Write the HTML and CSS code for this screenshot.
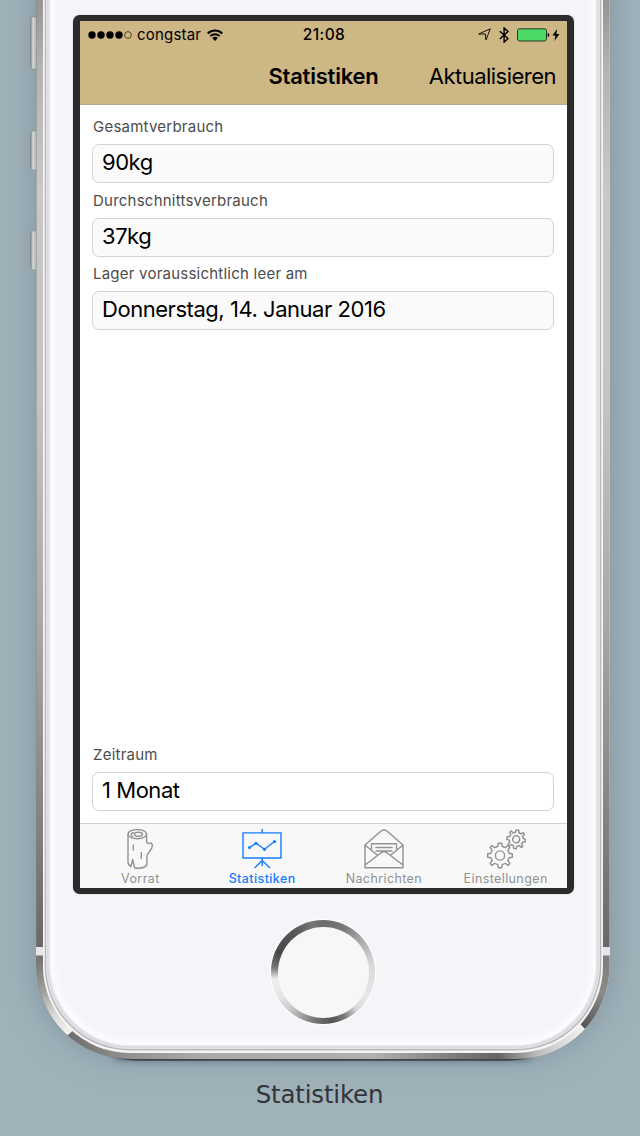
FILE: index.html
```html
<!DOCTYPE html>
<html lang="de">
<head>
<meta charset="utf-8">
<title>Statistiken</title>
<link rel="stylesheet" href="styles.css">
</head>
<body>
<div class="page">
  <svg class="device" viewBox="0 0 640 1136" aria-hidden="true">
    <defs>
      <linearGradient id="metal" gradientUnits="userSpaceOnUse" x1="0" y1="0" x2="0" y2="948">
        <stop offset="0" stop-color="#949494"/><stop offset=".07" stop-color="#b3b3b2"/><stop offset=".2" stop-color="#c8c8c6"/>
        <stop offset=".42" stop-color="#c4c4c2"/><stop offset=".65" stop-color="#a9a9a8"/><stop offset=".85" stop-color="#858585"/><stop offset="1" stop-color="#686868"/>
      </linearGradient>
      <linearGradient id="cornerL" gradientUnits="userSpaceOnUse" x1="38" y1="960" x2="64" y2="1034">
        <stop offset="0" stop-color="#757575"/><stop offset=".4" stop-color="#a0a09e"/><stop offset=".75" stop-color="#dcdcda"/><stop offset="1" stop-color="#f0f0ee"/>
      </linearGradient>
      <linearGradient id="bottom" gradientUnits="userSpaceOnUse" x1="66" y1="0" x2="581" y2="0">
        <stop offset="0" stop-color="#6c6c6b"/><stop offset=".1" stop-color="#8c8c8b"/><stop offset=".25" stop-color="#a9aaa8"/><stop offset=".6" stop-color="#b0b0ae"/>
        <stop offset=".77" stop-color="#777776"/><stop offset=".84" stop-color="#656565"/><stop offset=".92" stop-color="#c0c0be"/><stop offset="1" stop-color="#f0f0ee"/>
      </linearGradient>
      <linearGradient id="cornerR" gradientUnits="userSpaceOnUse" x1="608" y1="956" x2="586" y2="1028">
        <stop offset="0" stop-color="#7c7c7c"/><stop offset=".5" stop-color="#8c8c8b"/><stop offset="1" stop-color="#555"/>
      </linearGradient>
      <linearGradient id="key" x1="0" y1="0" x2="1" y2="0">
        <stop offset="0" stop-color="#77807f"/><stop offset=".3" stop-color="#d5d8d7"/><stop offset=".65" stop-color="#b4b9b9"/><stop offset="1" stop-color="#777d7f"/>
      </linearGradient>
      <filter id="wide" x="-20%" y="-20%" width="140%" height="140%"><feGaussianBlur stdDeviation="16"/></filter>
      <filter id="near" x="-20%" y="-50%" width="140%" height="200%"><feGaussianBlur stdDeviation="3"/></filter>
      <filter id="soft"><feGaussianBlur stdDeviation="2"/></filter>
      <clipPath id="upper"><rect x="30" y="0" width="585" height="951"/></clipPath>
      <clipPath id="left"><path d="M30 951H120V991L65.500 1037 60 1042H30z"/></clipPath>
      <clipPath id="right"><path d="M616 951H560V1000L583 1027 590 1033H616z"/></clipPath>
    </defs>
    <rect x="35" y="-150" width="576" height="1206" rx="92" fill="#697d8a" opacity=".55" filter="url(#wide)"/>
    <rect x="110" y="1035" width="426" height="26" rx="12" fill="#435562" opacity=".6" filter="url(#near)"/>
    <g fill="url(#key)" stroke="#868e90" stroke-width=".6">
      <rect x="30.500" y="17" width="8" height="52" rx="2"/>
      <rect x="30.500" y="131" width="8" height="39" rx="3"/>
      <rect x="30.500" y="231" width="8" height="39" rx="3"/>
    </g>
    <rect x="46" y="-200" width="554" height="1260.700" rx="93" fill="#3d4347"/>
    <rect x="36.500" y="-200" width="573" height="1259" rx="93" fill="url(#bottom)"/>
    <rect x="36.500" y="-200" width="573" height="1259" rx="93" fill="url(#metal)" clip-path="url(#upper)"/>
    <rect x="36.500" y="-200" width="573" height="1259" rx="93" fill="url(#cornerL)" clip-path="url(#left)"/>
    <rect x="36.500" y="-200" width="573" height="1259" rx="93" fill="url(#cornerR)" clip-path="url(#right)"/>
    <rect x="36" y="947" width="574" height="8.500" fill="#e4e5e8"/>
    <rect x="43" y="-200" width="560" height="1253" rx="87" fill="#f5f5f3"/>
    <rect x="44.700" y="-200" width="556.600" height="1250.500" rx="85" fill="#b9b9bb"/>
    <rect x="46" y="-200" width="554" height="1249" rx="84" fill="#e3e3e7"/>
    <rect x="47.500" y="-200" width="551" height="1247.500" rx="83" fill="#d5d6dc"/>
    <rect x="48.500" y="-200" width="549" height="1246.500" rx="82" fill="#e9eaf0"/>
    <rect x="50.500" y="-200" width="545" height="1245" rx="80" fill="#fbfcfe"/>
    <rect x="55" y="-200" width="536" height="1240" rx="76" fill="#f4f5f8" filter="url(#soft)"/>
  </svg>

  <main class="screen">
    <header class="navbar">
      <div class="status">
        <div class="carrier">
          <svg width="45" height="10" viewBox="0 0 45 10"><g><circle cx="4" cy="5" r="3.700"/><circle cx="13" cy="5" r="3.700"/><circle cx="22" cy="5" r="3.700"/><circle cx="31" cy="5" r="3.700"/><circle cx="40" cy="5" r="3.400" fill="none" stroke="#000" stroke-width=".6"/></g></svg>
          <span class="carrier-name">congstar</span>
          <svg width="16" height="12" viewBox="0 0 16 12"><g fill="none" stroke="#000" stroke-width="1.900"><path d="M.7 4.500A10.300 10.300 0 0 1 15.300 4.500"/><path d="M3.300 7.200A6.600 6.600 0 0 1 12.700 7.200"/></g><path d="M8 12 5.200 9.100A4 4 0 0 1 10.800 9.100z"/></svg>
        </div>
        <span class="clock">21:08</span>
        <div class="indicators">
          <svg width="13" height="13" viewBox="0 0 13 13"><path d="M12.300.8 8 12 7.300 6 .7 6z" fill="none" stroke="#000" stroke-width=".9"/></svg>
          <svg class="bluetooth" width="10" height="16" viewBox="0 0 10 16"><path d="M.8 4.200 9 11.500 5.100 15.200V.9L9 4.500.8 12" fill="none" stroke="#000" stroke-width="1.400"/></svg>
          <svg class="battery" width="33" height="14" viewBox="0 0 33 14"><rect x=".5" y=".8" width="29" height="12.200" rx="2" fill="#4cd964" stroke="#111" stroke-width=".8"/><path d="M30.700 5q1.700.3 1.700 2t-1.700 2z"/></svg>
          <svg width="8" height="12" viewBox="0 0 8 12"><path d="M5.200 0 .4 6.600H3.500L2.300 12 7.500 5H4.300z"/></svg>
        </div>
      </div>
      <div class="titlebar">
        <h1 class="title">Statistiken</h1>
        <span class="refresh">Aktualisieren</span>
      </div>
    </header>

    <section class="content">
      <div class="field"><span class="label">Gesamtverbrauch</span><div class="value"><span>90kg</span></div></div>
      <div class="field"><span class="label">Durchschnittsverbrauch</span><div class="value"><span>37kg</span></div></div>
      <div class="field"><span class="label">Lager voraussichtlich leer am</span><div class="value"><span>Donnerstag, 14. Januar 2016</span></div></div>
      <div class="field period"><span class="label">Zeitraum</span><div class="value editable"><span>1 Monat</span></div></div>
    </section>

    <nav class="tabs">
      <div class="tab">
        <svg width="40" height="40" viewBox="0 0 40 40"><g class="line"><ellipse cx="17.300" cy="5.200" rx="9.300" ry="4.600"/><ellipse cx="18.500" cy="5.300" rx="4" ry="2.100"/><path d="M12.500 7.500q-3-2.500 1-4M8 5.500V33Q8 36 11 37.500L12.700 30.500 14.500 38.700Q20 40 24.500 38Q27.300 37 27 33.500L26.800 28C26.800 23 32.300 21.500 32.300 17V15.500L30.600 13.800C29 15 27 14.500 26.600 13V5.500M13.300 16V21M21.300 23.500V29.500"/></g></svg>
        <span>Vorrat</span>
      </div>
      <div class="tab active">
        <svg width="40" height="40" viewBox="0 0 40 40"><g class="line"><path d="M1 3.900H39V29H1zM20.200.5V3.900M20.200 29V36.500M13 38.500 20.200 31.500 27.500 38.500"/><path d="M7.500 18.500 14 14.300 22.500 20.300 32.500 12.500"/></g><g fill="currentColor"><circle cx="7.500" cy="18.500" r="1.600"/><circle cx="14" cy="14.300" r="1.600"/><circle cx="22.500" cy="20.300" r="1.600"/><circle cx="32.500" cy="12.500" r="1.600"/></g></svg>
        <span>Statistiken</span>
      </div>
      <div class="tab">
        <svg width="40" height="40" viewBox="0 0 40 40"><g class="line"><path d="M1 16V38.700H39V16L23 2Q20 0 17 2zM1 16 13.500 26.300M39 16 26.500 26.300M1 36 17.500 23.500Q20 22 22.500 23.500L39 36M7.500 20V14.700H32.500V20M12 18.500H28M12 22H28"/></g></svg>
        <span>Nachrichten</span>
      </div>
      <div class="tab">
        <svg width="40" height="40" viewBox="0 0 40 40"><defs>
          <path id="cog" d="M-1.700-12.300H1.700L2.300-9Q4-8.700 5.200-7.800L8-9.900 9.900-8 7.800-5.200Q8.700-4 9-2.300L12.300-1.700V1.700L9 2.300Q8.700 4 7.800 5.200L9.900 8 8 9.900 5.200 7.800Q4 8.700 2.300 9L1.700 12.300H-1.700L-2.300 9Q-4 8.700-5.200 7.800L-8 9.900-9.900 8-7.800 5.200Q-8.700 4-9 2.300L-12.300 1.700V-1.700L-9-2.300Q-8.700-4-7.800-5.200L-9.900-8-8-9.900-5.200-7.800Q-4-8.700-2.300-9z"/></defs>
          <g class="line"><use href="#cog" x="14" y="26.500"/><circle cx="14" cy="26.500" r="4.600"/><g transform="translate(30.200 10.300) rotate(8) scale(.76)"><use href="#cog" stroke-width="1.900"/><circle r="4.600" stroke-width="1.900"/></g></g></svg>
        <span>Einstellungen</span>
      </div>
    </nav>
  </main>

  <div class="home"><div class="home-face"></div></div>
  <p class="caption">Statistiken</p>
</div>
</body>
</html>
```
FILE: styles.css
```css
* { box-sizing: border-box; }
body { margin: 0; background: #9fb1b9; font-family: Inter, "Liberation Sans", sans-serif; color: #000; }
.page { position: relative; width: 640px; height: 1136px; overflow: hidden; padding: 15px 0 0 73px; }
.device { position: absolute; left: 0; top: 0; width: 640px; height: 1136px; }
svg { display: block; flex: none; }
span { white-space: nowrap; }

.screen { position: relative; width: 501px; height: 879px; display: flex; flex-direction: column; border: 6px solid #2b2b2b; border-left-width: 7px; border-right-width: 7px; border-radius: 7px; background: #fff; box-shadow: 0 0 1px #777; }
.navbar { height: 84px; background: #cdb785; border-bottom: 1px solid #b5aa92; }
.status { height: 27px; padding: 0 7px 0 8px; display: grid; grid-template-columns: 1fr auto 1fr; align-items: center; font-size: 15px; }
.carrier, .indicators { display: flex; align-items: center; }
.carrier-name { margin: 0 6px 0 4px; font-size: 15px; letter-spacing: .2px; }
.clock { font-weight: 500; font-size: 15.500px; letter-spacing: .4px; }
.indicators { justify-content: flex-end; }
.bluetooth { margin-left: 8px; }
.battery { margin: 0 2px 0 8px; }
.titlebar { height: 56px; padding: 0 11px; display: grid; grid-template-columns: 1fr auto 1fr; align-items: center; font-size: 22px; }
.title { grid-column: 2; margin: 0; font-size: 22px; font-weight: 600; line-height: 28px; letter-spacing: -.2px; }
.refresh { justify-self: end; line-height: 28px; letter-spacing: -.52px; }

.content { flex: 1; display: flex; flex-direction: column; padding: 11px 13px 12px 12px; }
.field { height: 73.500px; display: flex; flex-direction: column; }
.label { height: 28px; line-height: 22px; padding-left: 1px; font-size: 15px; letter-spacing: .23px; color: #4c4c4c; }
.value { height: 39px; display: flex; align-items: center; padding: 0 9px 3px; border: 1px solid #d2d2d2; border-radius: 7px; background: #fafafa; font-size: 22px; letter-spacing: -.46px; }
.value.editable { background: #fff; }
.period { margin-top: auto; height: 67px; }

.tabs { height: 65px; display: grid; grid-template-columns: repeat(4, 1fr); border-top: 1px solid #d0d0d0; background: #f8f8f8; }
.tab { display: flex; flex-direction: column; align-items: center; padding: 5px 1px 0 0; font-size: 12.500px; line-height: 20px; letter-spacing: .4px; color: #929292; }
.active { color: #157efb; }
.active span { font-weight: 500; }
.line { fill: none; stroke: currentColor; stroke-width: 1.400; stroke-linejoin: round; stroke-linecap: round; }

.home { position: relative; width: 104px; height: 104px; margin: 26px 0 0 198px; padding: 6.500px; border-radius: 50%; background: conic-gradient(#6b6b6b 0deg, #777 25deg, #aaa 50deg, #d8d8d8 80deg, #e9e9e9 120deg, #d8d8d8 138deg, #777 155deg, #555 170deg, #777 190deg, #c8c8c8 220deg, #e6e6e6 240deg, #eee 262deg, #777 275deg, #484848 292deg, #585858 325deg, #777 348deg, #6b6b6b 360deg); box-shadow: 0 0 2px 1px #fff; }
.home-face { height: 100%; border-radius: 50%; background: #f6f7f9; }
.caption { position: relative; width: 501px; margin: 55px 0 0 -4px; text-align: center; font: 24.500px/32px "DejaVu Sans", sans-serif; letter-spacing: -.2px; color: #333538; }
```
